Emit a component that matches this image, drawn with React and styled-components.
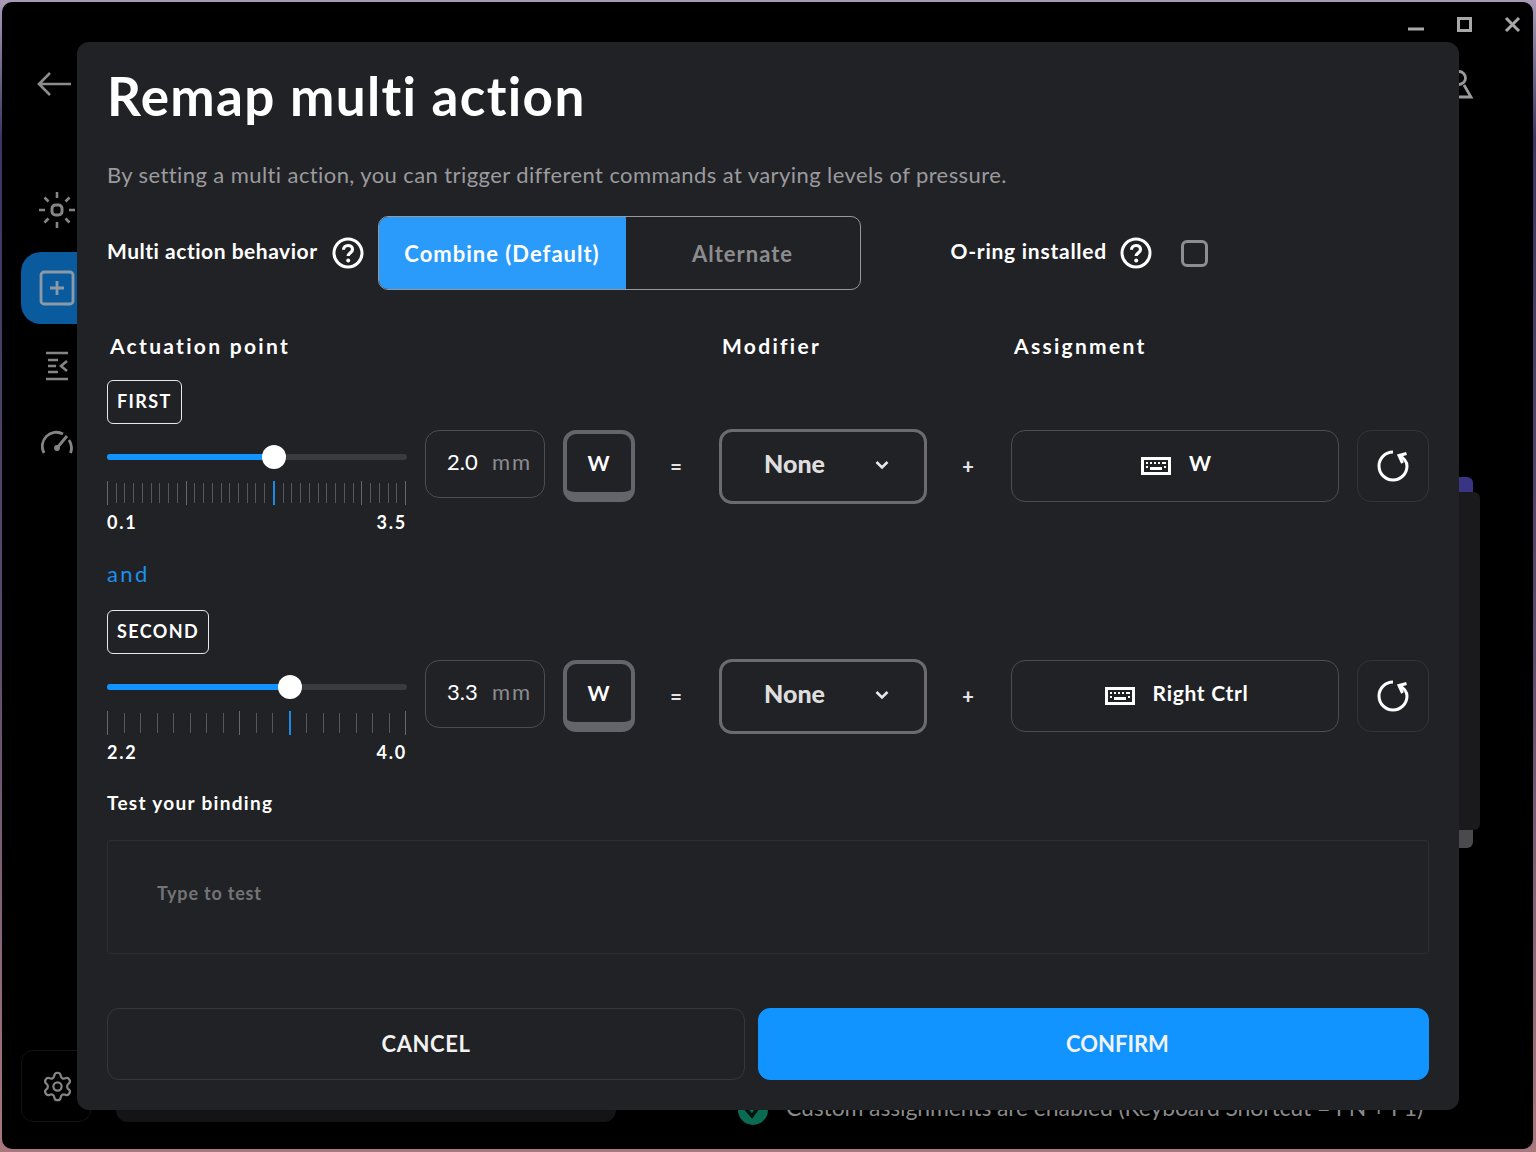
import React from "react";
import styled, { createGlobalStyle } from "styled-components";
import { Settings } from "lucide-react";

const GlobalStyle = createGlobalStyle`
  * {
    box-sizing: border-box;
  }
  html, body {
    margin: 0;
    height: 100%;
    overflow: hidden;
  }
  body {
    font-family: "Lato", "Noto Sans", sans-serif;
    font-variant-ligatures: none;
  }
`;

const Desktop = styled.div`
  width: 1536px;
  height: 1152px;
  padding: 2px 3px 3px 2px;
  background: linear-gradient(180deg, #a99bb8 0%, #3b3560 12%, #5a4a6c 55%, #a8787e 100%);
`;

const AppWindow = styled.div`
  position: relative;
  height: 100%;
  display: flex;
  flex-direction: column;
  background: #000;
  border-radius: 10px;
  overflow: hidden;
`;

const TitleBar = styled.div`
  height: 40px;
  flex: none;
  display: flex;
  justify-content: flex-end;
  align-items: flex-start;
  gap: 24px;
  padding: 12px 8px 0 0;
  color: #a8a8a8;
`;

const Body = styled.div`
  flex: 1;
  display: flex;
  min-height: 0;
`;

const Rail = styled.nav`
  width: 91px;
  flex: none;
  display: flex;
  flex-direction: column;
  padding: 24px 0 27px 19px;
  color: #858585;
`;

const RailSlot = styled.div`
  width: 72px;
  height: ${(p) => p.$height || 36}px;
  margin-top: ${(p) => p.$top || 0}px;
  padding-left: ${(p) => p.$left || 0}px;
  display: flex;
  align-items: center;
  justify-content: ${(p) => (p.$left ? "flex-start" : "center")};
  flex: none;
`;

const ActiveTab = styled(RailSlot)`
  background: #0a5a9e;
  border-radius: 20px 0 0 20px;
  color: #8c9aa8;
  justify-content: flex-start;
  padding-left: 18px;
`;

const GearBox = styled(RailSlot)`
  width: 70px;
  margin-top: auto;
  border: 1px solid #121214;
  border-radius: 12px;
  justify-content: flex-start;
  padding-left: 19px;
`;

const Main = styled.main`
  flex: 1;
  display: flex;
  flex-direction: column;
  padding: 0 0 24px 23px;
  color: #8a8a8a;
`;

const Profile = styled.div`
  align-self: flex-end;
  margin: 28px 56px 0 0;
  height: 30px;
`;

const Device = styled.div`
  align-self: flex-end;
  width: 60px;
  margin: 377px 53px 0 0;
  display: flex;
  flex-direction: column;
  align-items: flex-start;
`;

const DeviceCap = styled.div`
  width: 53px;
  height: 15px;
  border-radius: 0 6px 0 0;
  background: #3a3484;
`;

const DeviceBody = styled.div`
  width: 60px;
  height: 338px;
  border-radius: 0 6px 6px 0;
  background: #1a1a1c;
`;

const DeviceFoot = styled.div`
  width: 53px;
  height: 18px;
  border-radius: 0 0 6px 0;
  background: #4a4a4c;
`;

const Footer = styled.div`
  margin-top: auto;
  display: flex;
  align-items: flex-start;
  gap: 122px;
`;

const FooterPanel = styled.div`
  width: 500px;
  height: 72px;
  flex: none;
  background: #141416;
  border-radius: 12px;
`;

const Status = styled.div`
  margin-top: 45px;
  display: flex;
  align-items: flex-start;
  gap: 18px;
  font-size: 23px;
  line-height: 24px;
  letter-spacing: -0.13px;
  white-space: nowrap;
`;

const StatusDot = styled.svg`
  width: 30px;
  height: 30px;
  flex: none;
`;

const Modal = styled.section`
  position: absolute;
  left: 75px;
  top: 40px;
  width: 1382px;
  padding: 25px 30px 30px;
  background: #212226;
  border-radius: 12px;
  color: #fff;
`;

const Title = styled.h1`
  margin: 0;
  height: 60px;
  font-size: 53px;
  line-height: 58px;
  font-weight: 700;
  letter-spacing: 1.35px;
`;

const Description = styled.p`
  margin: 33px 0 0;
  height: 30px;
  font-size: 22px;
  line-height: 30px;
  letter-spacing: 0.41px;
  color: #9b9b9e;
`;

const BehaviorRow = styled.div`
  margin-top: 26px;
  height: 74px;
  display: flex;
  align-items: center;
`;

const OptionLabel = styled.span`
  padding-bottom: 5px;
  font-size: 21px;
  font-weight: 700;
  letter-spacing: ${(p) => p.$spacing}px;
  white-space: nowrap;
`;

const HelpIcon = styled.svg`
  width: 32px;
  height: 32px;
  flex: none;
  margin-left: ${(p) => p.$left}px;
`;

const Toggle = styled.div`
  width: 483px;
  height: 74px;
  margin-left: 14px;
  display: flex;
  border: 1px solid #98989b;
  border-radius: 10px;
  overflow: hidden;
`;

const ToggleOption = styled.div`
  width: ${(p) => (p.$active ? "247px" : "auto")};
  flex: ${(p) => (p.$active ? "none" : 1)};
  display: flex;
  align-items: center;
  justify-content: center;
  padding-top: 1px;
  font-size: 22px;
  font-weight: 700;
  letter-spacing: 1px;
  color: ${(p) => (p.$active ? "#fff" : "#8c8c8f")};
  background: ${(p) => (p.$active ? "#2b9bfb" : "transparent")};
`;

const RingOption = styled.div`
  margin-left: 90px;
  display: flex;
  align-items: center;
`;

const Checkbox = styled.span`
  width: 27px;
  height: 27px;
  margin-left: 29px;
  border: 3px solid #8e8e91;
  border-radius: 6px;
`;

const HeaderRow = styled.div`
  margin-top: 42px;
  height: 30px;
  padding: 0 0 4px 3px;
  display: grid;
  grid-template-columns: 612px 292px 1fr;
  align-items: center;
`;

const ColumnHeading = styled.h2`
  margin: 0;
  font-size: 21px;
  font-weight: 700;
  letter-spacing: 2.3px;
`;

const ActionGroup = styled.div`
  margin-top: ${(p) => p.$top || 0}px;
`;

const Badge = styled.div`
  display: inline-flex;
  align-items: center;
  height: 44px;
  padding: 0 9px 2px;
  border: 1px solid #e8e8e8;
  border-radius: 6px;
  font-size: 18px;
  font-weight: 700;
  letter-spacing: 1.4px;
  vertical-align: top;
`;

const ActionRow = styled.div`
  margin-top: 6px;
  display: flex;
  align-items: flex-start;
`;

const SliderColumn = styled.div`
  width: 300px;
  height: 104px;
  flex: none;
  margin-right: 18px;
`;

const SliderTrack = styled.div`
  position: relative;
  height: 6px;
  margin-top: 24px;
  border-radius: 3px;
  background: #3a3b3f;
`;

const SliderFill = styled.div`
  height: 100%;
  border-radius: 3px;
  background: #1194ff;
`;

const SliderThumb = styled.div`
  position: absolute;
  top: -9px;
  width: 24px;
  height: 24px;
  margin-left: -12px;
  border-radius: 50%;
  background: #fff;
`;

const Ticks = styled.div`
  margin-top: 21px;
  height: 24px;
  padding-right: 1px;
  display: flex;
  justify-content: space-between;
  align-items: center;
`;

const Tick = styled.span`
  width: ${(p) => (p.$active ? 2 : 1)}px;
  height: ${(p) => (p.$major || p.$active ? 24 : 20)}px;
  background: ${(p) => (p.$active ? "#1a8ae6" : p.$major ? "#66676b" : "#56575b")};
`;

const RangeLabels = styled.div`
  margin-top: 5px;
  display: flex;
  justify-content: space-between;
  font-size: 18px;
  line-height: 24px;
  font-weight: 700;
  letter-spacing: 1.8px;
`;

const AndLabel = styled.div`
  margin: 25px 0 21px;
  height: 30px;
  font-size: 22px;
  line-height: 29px;
  letter-spacing: 2.4px;
  color: #1c8fef;
`;

const NumberBox = styled.div`
  width: 120px;
  height: 68px;
  flex: none;
  margin-right: 18px;
  padding: 0 12px 6px 21px;
  display: flex;
  align-items: center;
  justify-content: space-between;
  border: 1px solid #4c4d51;
  border-radius: 14px;
  font-size: 22px;
`;

const Unit = styled.span`
  letter-spacing: 1.9px;
  color: #8c8c8f;
`;

const KeyCap = styled.div`
  width: 72px;
  height: 72px;
  flex: none;
  display: flex;
  align-items: center;
  justify-content: center;
  padding: 0 1px 2px 0;
  border: 4px solid #64656b;
  border-bottom-width: 10px;
  border-radius: 13px;
  font-size: 21px;
  font-weight: 700;
`;

const Operator = styled.div`
  width: 84px;
  height: 72px;
  flex: none;
  display: flex;
  align-items: center;
  justify-content: center;
  padding: 0 2px 1px 0;
  font-size: 20px;
  font-weight: 900;
  color: #e4e4e4;
`;

const Dropdown = styled.div`
  width: 208px;
  height: 75px;
  flex: none;
  margin-top: -1px;
  padding: 0 0 8px 42px;
  display: flex;
  align-items: center;
  border: 3px solid #6c6c6f;
  border-radius: 13px;
  font-size: 25px;
  font-weight: 900;
  color: #dedede;
`;

const Chevron = styled.svg`
  width: 14px;
  height: 10px;
  margin: 4px 0 0 50px;
`;

const AssignBox = styled.div`
  width: 328px;
  height: 72px;
  flex: none;
  margin-right: 18px;
  padding-left: 3px;
  display: flex;
  align-items: center;
  justify-content: center;
  gap: 18px;
  border: 1px solid #4c4d51;
  border-radius: 14px;
  font-size: 21px;
  font-weight: 700;
  letter-spacing: 0.7px;
`;

const AssignText = styled.span`
  padding-bottom: 7px;
`;

const ResetButton = styled.div`
  width: 72px;
  height: 72px;
  flex: none;
  display: flex;
  align-items: center;
  justify-content: center;
  border: 1px solid #333438;
  border-radius: 14px;
`;

const TestLabel = styled.div`
  margin-top: 27px;
  height: 24px;
  font-size: 19px;
  line-height: 24px;
  font-weight: 700;
  letter-spacing: 1.3px;
`;

const TestInput = styled.input`
  display: block;
  width: 100%;
  height: 114px;
  margin-top: 25px;
  padding: 0 49px 8px;
  background: transparent;
  border: 1px solid #2d2e32;
  border-radius: 4px;
  outline: none;
  font-family: inherit;
  font-size: 18px;
  font-weight: 700;
  letter-spacing: 0.8px;
  color: #fff;
  &::placeholder {
    color: #737477;
  }
`;

const Actions = styled.div`
  margin-top: 54px;
  display: flex;
  gap: 13px;
`;

const ActionButton = styled.button`
  width: ${(p) => p.$width}px;
  height: 72px;
  padding: ${(p) => (p.$primary ? "0 0 2px 48px" : "0 0 2px")};
  border: 1px solid ${(p) => (p.$primary ? "#1194ff" : "#36373b")};
  border-radius: 12px;
  background: ${(p) => (p.$primary ? "#1194ff" : "transparent")};
  color: #f2f2f2;
  font-family: inherit;
  font-size: 22px;
  font-weight: 700;
  letter-spacing: ${(p) => (p.$primary ? "0" : "0.6px")};
`;

const Help = ({ left }) => (
  <HelpIcon $left={left} viewBox="0 0 32 32" fill="none" stroke="#fff">
    <circle cx="16" cy="16" r="14" strokeWidth="3" />
    <path d="M11.500 12.800c0-2.800 2-4.300 4.500-4.300s4.500 1.500 4.500 3.900c0 3.200-4.300 3.300-4.300 6.600" strokeWidth="3.200" />
    <circle cx="16.200" cy="23.500" r="2" fill="#fff" stroke="none" />
  </HelpIcon>
);

const KeyboardIcon = () => (
  <svg width="30" height="18" viewBox="0 0 30 18" fill="none">
    <rect x="1.500" y="1.500" width="27" height="15" stroke="#fff" strokeWidth="3" />
    <path
      d="M5 5h2v2H5zM9 5h2v2H9zM13 5h2v2h-2zM17 5h2v2h-2zM21 5h2v2h-2zM5 9h2v2H5zM23 5h2v2h-2zM23 9h2v2h-2zM9 10h12v3H9z"
      fill="#fff"
    />
  </svg>
);

const ResetIcon = () => (
  <svg width="32" height="32" viewBox="0 0 32 32" fill="none" stroke="#fff" strokeWidth="3">
    <path d="M16 2A14 14 0 1 0 30 16c0-4-3-8-8-11" />
    <path d="M29.500 3.500L22 5.500l3.500 7.500" />
  </svg>
);

const scaleTicks = (count, majors, active) =>
  Array.from({ length: count }, (_, i) => (
    <Tick key={i} $major={majors.includes(i)} $active={i === active} />
  ));

const ACTIONS = [
  {
    id: "first",
    badge: "FIRST",
    value: "2.0",
    percent: 55.67,
    min: "0.1",
    max: "3.5",
    ticks: 35,
    majors: [0, 9, 29, 34],
    active: 19,
    assignment: "W",
  },
  {
    id: "second",
    badge: "SECOND",
    value: "3.3",
    percent: 61,
    min: "2.2",
    max: "4.0",
    ticks: 19,
    majors: [0, 8, 18],
    active: 11,
    assignment: "Right Ctrl",
  },
];

const Action = ({ action, top }) => (
  <ActionGroup $top={top}>
    <Badge>{action.badge}</Badge>
    <ActionRow>
      <SliderColumn>
        <SliderTrack>
          <SliderFill style={{ width: `${action.percent}%` }} />
          <SliderThumb style={{ left: `${action.percent}%` }} />
        </SliderTrack>
        <Ticks>{scaleTicks(action.ticks, action.majors, action.active)}</Ticks>
        <RangeLabels>
          <span>{action.min}</span>
          <span>{action.max}</span>
        </RangeLabels>
      </SliderColumn>
      <NumberBox>
        <span>{action.value}</span>
        <Unit>mm</Unit>
      </NumberBox>
      <KeyCap>W</KeyCap>
      <Operator>=</Operator>
      <Dropdown>
        None
        <Chevron viewBox="0 0 14 10" fill="none" stroke="#e8e8e8" strokeWidth="2.600">
          <path d="M1.500 2l5.500 5.500L12.500 2" />
        </Chevron>
      </Dropdown>
      <Operator>+</Operator>
      <AssignBox>
        <KeyboardIcon />
        <AssignText>{action.assignment}</AssignText>
      </AssignBox>
      <ResetButton>
        <ResetIcon />
      </ResetButton>
    </ActionRow>
  </ActionGroup>
);

export default function App() {
  return (
    <>
      <GlobalStyle />
      <Desktop>
        <AppWindow>
          <TitleBar>
            <svg width="26" height="20" viewBox="0 0 26 20" stroke="currentColor" strokeWidth="3" fill="none">
              <path d="M5 15h16" />
            </svg>
            <svg width="24" height="20" viewBox="0 0 24 20" stroke="currentColor" strokeWidth="3" fill="none">
              <rect x="5.500" y="4.500" width="12" height="12" />
            </svg>
            <svg width="24" height="20" viewBox="0 0 24 20" stroke="currentColor" strokeWidth="3" fill="none">
              <path d="M5 4l13 13M18 4L5 17" />
            </svg>
          </TitleBar>
          <Body>
            <Rail>
              <RailSlot $left={15}>
                <svg width="36" height="26" viewBox="0 0 36 26" fill="none" stroke="#8c8c8c" strokeWidth="2.600">
                  <path d="M35 13H3M14 2L3 13l11 11" />
                </svg>
              </RailSlot>
              <RailSlot $top={90}>
                <svg width="38" height="38" viewBox="0 0 38 38" fill="none" stroke="currentColor" strokeWidth="2.600">
                  <rect x="14" y="14" width="10" height="10" rx="3.500" strokeWidth="3" />
                  <path d="M19 1v6M19 31v6M1 19h6M31 19h6M6.500 6.500l4 4M27.500 27.500l4 4M31.500 6.500l-4 4M10.500 27.500l-4 4" />
                </svg>
              </RailSlot>
              <ActiveTab $top={24} $height={72}>
                <svg width="36" height="36" viewBox="0 0 36 36" fill="none" stroke="currentColor" strokeWidth="2.800">
                  <rect x="2" y="2" width="32" height="32" rx="3" />
                  <path d="M11 18h14M18 11v14" />
                </svg>
              </ActiveTab>
              <RailSlot $top={24}>
                <svg width="26" height="30" viewBox="0 0 26 30" fill="none" stroke="currentColor" strokeWidth="2.600">
                  <path d="M2 2h22M2 28h22M4 9h10M4 15h8M4 21h10M23 10l-6 5 6 5" />
                </svg>
              </RailSlot>
              <RailSlot $top={40}>
                <svg width="32" height="26" viewBox="0 0 32 26" fill="none" stroke="currentColor" strokeWidth="2.800">
                  <path d="M3 24A14 14 0 0 1 22 5M28 11a14 14 0 0 1 1.500 13" />
                  <path d="M16 19L26 7" />
                  <circle cx="16" cy="19" r="1.500" fill="currentColor" />
                </svg>
              </RailSlot>
              <GearBox $height={72}>
                <Settings size={33} strokeWidth={1.6} />
              </GearBox>
            </Rail>
            <Main>
              <Profile>
                <svg width="30" height="30" viewBox="0 0 30 30" fill="none" stroke="#9a9a9a" strokeWidth="2.800">
                  <circle cx="12" cy="8" r="6.500" />
                  <path d="M17 15l7 12H2" />
                </svg>
              </Profile>
              <Device>
                <DeviceCap />
                <DeviceBody />
                <DeviceFoot />
              </Device>
              <Footer>
                <FooterPanel />
                <Status>
                  <StatusDot viewBox="0 0 30 30" fill="none">
                    <circle cx="15" cy="15" r="15" fill="#0b6b52" />
                    <path d="M8 14l6 7 8-11" stroke="#04120e" strokeWidth="3.500" />
                  </StatusDot>
                  Custom assignments are enabled (Keyboard Shortcut = FN + F1)
                </Status>
              </Footer>
            </Main>
          </Body>

          <Modal>
            <Title>Remap multi action</Title>
            <Description>
              By setting a multi action, you can trigger different commands at varying levels of pressure.
            </Description>
            <BehaviorRow>
              <OptionLabel $spacing={0.52}>Multi action behavior</OptionLabel>
              <Help left={14} />
              <Toggle>
                <ToggleOption $active>Combine (Default)</ToggleOption>
                <ToggleOption>Alternate</ToggleOption>
              </Toggle>
              <RingOption>
                <OptionLabel $spacing={0.75}>O-ring installed</OptionLabel>
                <Help left={13} />
                <Checkbox />
              </RingOption>
            </BehaviorRow>
            <HeaderRow>
              <ColumnHeading>Actuation point</ColumnHeading>
              <ColumnHeading>Modifier</ColumnHeading>
              <ColumnHeading>Assignment</ColumnHeading>
            </HeaderRow>
            <Action action={ACTIONS[0]} top={18} />
            <AndLabel>and</AndLabel>
            <Action action={ACTIONS[1]} />
            <TestLabel>Test your binding</TestLabel>
            <TestInput placeholder="Type to test" />
            <Actions>
              <ActionButton $width={638}>CANCEL</ActionButton>
              <ActionButton $width={671} $primary>CONFIRM</ActionButton>
            </Actions>
          </Modal>
        </AppWindow>
      </Desktop>
    </>
  );
}
